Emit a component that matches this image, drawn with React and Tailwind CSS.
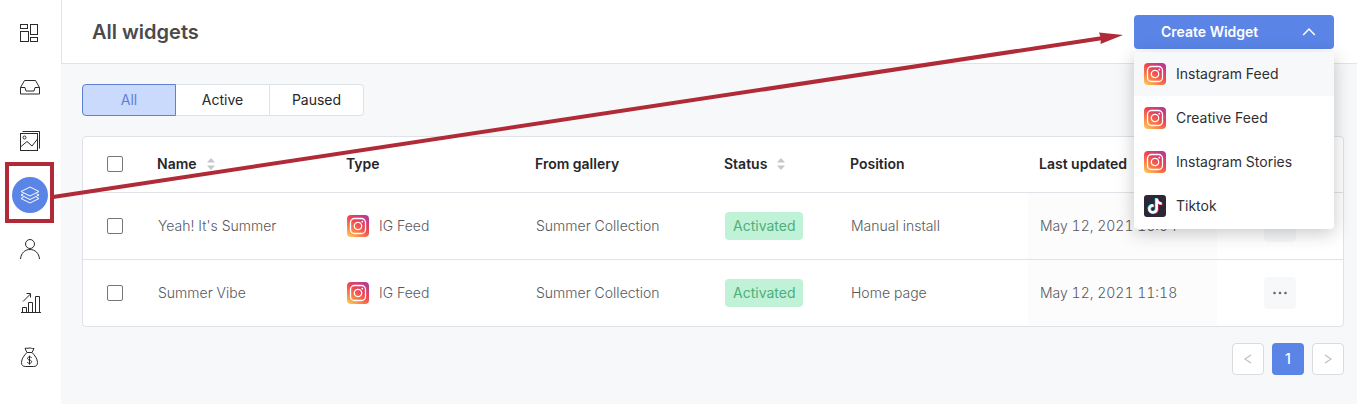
import { useState } from 'react';

const tabs = ['All', 'Active', 'Paused'];

const widgets = [
  { id: 1, name: "Yeah! It's Summer", type: 'IG Feed', gallery: 'Summer Collection', status: 'Activated', position: 'Manual install', updated: 'May 12, 2021 16:04' },
  { id: 2, name: 'Summer Vibe', type: 'IG Feed', gallery: 'Summer Collection', status: 'Activated', position: 'Home page', updated: 'May 12, 2021 11:18' },
];

const menuItems = [
  { label: 'Instagram Feed', icon: 'instagram' },
  { label: 'Creative Feed', icon: 'instagram' },
  { label: 'Instagram Stories', icon: 'instagram' },
  { label: 'Tiktok', icon: 'tiktok' },
];

// Sidebar icons, all on a 20x20 grid
const navItems = [
  {
    label: 'Dashboard',
    icon: (
      <>
        <rect x="0.5" y="1.5" width="7" height="4" />
        <rect x="10.5" y="1.5" width="7" height="10" />
        <rect x="0.5" y="8.5" width="8" height="10" />
        <rect x="10.5" y="14.5" width="7" height="4" />
      </>
    ),
  },
  {
    label: 'Inbox',
    icon: <path d="M0.5 10.5 4.5 3.5h11l4 7v6.5H0.5zM0.5 10.5h4.5l1 3.5h8l1-3.5h4.5" />,
  },
  {
    label: 'Media',
    icon: (
      <>
        <rect x="0.5" y="2.5" width="17" height="17" />
        <path d="M2.5 0.5h17v17" />
        <circle cx="4.5" cy="6.5" r="1.5" />
        <path d="m1 15.500 6-5 5 4.500 5.500-7" />
      </>
    ),
  },
  {
    label: 'Widgets',
    active: true,
    icon: (
      <>
        <path d="m10 2 9 4.500-9 4.500-9-4.500z" />
        <path d="M3.500 8.700 1 10l9 4.500 9-4.500-2.500-1.300" />
        <path d="M3.500 12.200 1 13.500l9 4.500 9-4.500-2.500-1.300" />
      </>
    ),
  },
  {
    label: 'Customers',
    icon: (
      <>
        <circle cx="10" cy="5" r="4.5" />
        <path d="M0.500 20C1 14 5 10.500 10 10.500S19 14 19.500 20" />
      </>
    ),
  },
  {
    label: 'Analytics',
    icon: (
      <path d="M1 19.500h20M2.500 19.500v-5h4v5M8.500 19.500v-10h4v10M15.500 19.500v-16h4v16M3 8.500l7.500-7.500M6.500 0.500h4v4" />
    ),
  },
  {
    label: 'Billing',
    icon: (
      <>
        <path d="M7 5.500 5 1.500c1.500-1 2.500 0.500 4-0.500 1.500-0.500 3 1 5 0.500l-2 4z" />
        <path d="M7 5.500C4 8.500 1.500 12 1.500 15.500c0 3 1.500 4 4 4h8c2.500 0 4-1 4-4 0-3.500-2.500-7-5.500-10" />
        <path d="M11.700 11c-0.500-1-1-1-2.200-1-2.700 0-2.700 2.600 0 3 3 0.500 2.700 3.300 0 3.300-1.300 0-1.800-0.500-2.300-1.300M9.500 8.700v9" />
      </>
    ),
  },
];

const columns = [
  { label: 'Name', sortable: true, width: 'w-[15%]' },
  { label: 'Type', width: 'w-[15%]' },
  { label: 'From gallery', width: 'w-[15%]' },
  { label: 'Status', sortable: true, width: 'w-[10%]' },
  { label: 'Position', width: 'w-[15%]' },
  { label: 'Last updated', width: 'w-[15%]' },
];

function InstagramIcon() {
  return (
    <svg viewBox="0 0 22 22" className="size-[22px] shrink-0" aria-hidden="true">
      <defs>
        <linearGradient id="ig" x1="0.15" y1="1" x2="0.85" y2="0">
          <stop offset="0" stopColor="#fdc357" />
          <stop offset="0.3" stopColor="#fa7a45" />
          <stop offset="0.6" stopColor="#ec4457" />
          <stop offset="1" stopColor="#b23a9c" />
        </linearGradient>
      </defs>
      <rect width="22" height="22" rx="4" fill="url(#ig)" />
      <g fill="none" stroke="#fff" strokeWidth="1.3">
        <rect x="3.5" y="3.5" width="15" height="15" rx="4" />
        <circle cx="11" cy="11" r="3.7" />
      </g>
      <circle cx="15.3" cy="6.7" r="0.9" fill="#fff" />
    </svg>
  );
}

function TiktokIcon() {
  const note = 'M11.500 3.500h2.400c0.300 2.300 1.600 3.600 3.800 3.800v2.500c-1.400 0-2.700-0.400-3.800-1.200v5.200c0 6.400-9.300 6.600-9.700 0.400 0-3.300 2.600-5.200 5.400-4.800v2.500c-1.700-0.400-3 0.600-3 2.200 0 2.900 4.900 3 4.900-0.500z';
  return (
    <svg viewBox="0 0 22 22" className="size-[22px] shrink-0" aria-hidden="true">
      <rect width="22" height="22" rx="3" fill="#2b2638" />
      <path d={note} fill="#25e5df" transform="translate(-0.700 -0.400)" />
      <path d={note} fill="#f5295b" transform="translate(0.700 0.500)" />
      <path d={note} fill="#fff" />
    </svg>
  );
}

function SortIcon() {
  return (
    <svg viewBox="0 0 8 12" className="h-3 w-2" fill="#c4c7cb" aria-hidden="true">
      <path d="M4 0 8 4.500H0zM4 12 0 7.500h8z" />
    </svg>
  );
}

function Chevron({ d, className }) {
  return (
    <svg viewBox="0 0 12 12" className={className} fill="none" stroke="currentColor" aria-hidden="true">
      <path d={d} strokeWidth="1.3" />
    </svg>
  );
}

function Checkbox({ label }) {
  return (
    <input
      type="checkbox"
      aria-label={label}
      className="block size-4 appearance-none rounded-xs border border-[#767676] bg-white checked:bg-[#5a84e6]"
    />
  );
}

function Sidebar() {
  return (
    <nav className="flex w-[61px] shrink-0 flex-col items-center gap-[18px] bg-white pt-[15px] pr-0.5 pb-7">
      {navItems.map(item => (
        <a
          key={item.label}
          href="#"
          aria-label={item.label}
          className={`flex size-9 items-center justify-center rounded-full ${item.active ? 'bg-[#5a84e6] text-white' : 'text-[#2b2b2b]'}`}
        >
          <svg viewBox="0 0 20 20" className="size-5 overflow-visible" fill="none" stroke="currentColor" strokeWidth="1">
            {item.icon}
          </svg>
        </a>
      ))}
    </nav>
  );
}

function CreateMenu() {
  const [open, setOpen] = useState(true);

  return (
    <div className="relative w-50">
      <button
        onClick={() => setOpen(!open)}
        aria-expanded={open}
        className="flex h-[34px] w-full items-center justify-between rounded-sm bg-[#5a84e6] pr-[18px] pl-[27px] text-sm font-semibold text-white"
      >
        Create Widget
        <Chevron d="M1 8.500 6 3.500 11 8.500" className="size-3.5" />
      </button>
      {open && (
        <ul className="absolute top-full right-0 left-0 z-10 mt-[3px] overflow-hidden rounded-sm bg-white pb-px shadow-[0_4px_18px_rgba(0,0,0,0.22)]">
          {menuItems.map((item, i) => (
            <li key={item.label}>
              <button className={`flex h-11 w-full items-center gap-2.5 px-2.5 text-sm text-[#2f2f33] ${i === 0 ? 'bg-[#f7f8fa]' : 'bg-white'}`}>
                {item.icon === 'tiktok' ? <TiktokIcon /> : <InstagramIcon />}
                {item.label}
              </button>
            </li>
          ))}
        </ul>
      )}
    </div>
  );
}

function WidgetTable() {
  return (
    <div className="rounded-sm border border-[#dfe2e6] bg-white">
      <table className="w-full table-fixed text-left text-sm">
        <thead>
          <tr className="h-[55px] border-b border-[#dfe2e6] text-[#26262b]">
            <th className="w-[5%] pl-6">
              <Checkbox label="Select all" />
            </th>
            {columns.map(col => (
              <th key={col.label} className={`px-[11px] font-semibold ${col.width}`}>
                <div className="flex items-center gap-2.5 whitespace-nowrap">
                  {col.label}
                  {col.sortable && <SortIcon />}
                </div>
              </th>
            ))}
            <th className="w-[10%]" aria-label="Actions" />
          </tr>
        </thead>
        <tbody className="text-[#57595e]">
          {widgets.map(widget => (
            <tr key={widget.id} className="h-[67px] border-b border-[#dfe2e6] font-light last:border-0">
              <td className="pl-6">
                <Checkbox label={`Select ${widget.name}`} />
              </td>
              <td className="px-3">{widget.name}</td>
              <td className="px-3">
                <div className="flex items-center gap-2.5">
                  <InstagramIcon />
                  {widget.type}
                </div>
              </td>
              <td className="px-3">{widget.gallery}</td>
              <td className="px-3">
                <span className="inline-block rounded-sm bg-[#c0f2d7] px-2 py-1 font-normal text-[#4fae7c]">
                  {widget.status}
                </span>
              </td>
              <td className="px-3">{widget.position}</td>
              <td className="bg-[#fcfcfc] px-3 whitespace-nowrap tabular-nums">{widget.updated}</td>
              <td>
                <button aria-label="More actions" className="mx-auto flex size-8 items-center justify-center rounded-sm bg-[#f7f8fa] text-[#666a70]">
                  <svg viewBox="0 0 14 4" className="h-1 w-3.5" fill="currentColor">
                    <circle cx="1.5" cy="2" r="1.3" />
                    <circle cx="7" cy="2" r="1.3" />
                    <circle cx="12.5" cy="2" r="1.3" />
                  </svg>
                </button>
              </td>
            </tr>
          ))}
        </tbody>
      </table>
    </div>
  );
}

function Pagination() {
  return (
    <div className="mt-4 flex justify-end gap-2 text-sm">
      <button aria-label="Previous page" className="flex size-8 items-center justify-center rounded-sm border border-[#d9dbdf] bg-white text-[#c0c2c6]">
        <Chevron d="M9 2 3 6l6 4" className="size-3" />
      </button>
      <button className="size-8 rounded-sm bg-[#5a84e6] font-medium text-white">1</button>
      <button aria-label="Next page" className="flex size-8 items-center justify-center rounded-sm border border-[#d9dbdf] bg-white text-[#c0c2c6]">
        <Chevron d="m3 2 6 4-6 4" className="size-3" />
      </button>
    </div>
  );
}

// Red marker box round the nav item, with an arrow to the create button
function Callout() {
  return (
    <svg width="1130" height="230" className="pointer-events-none absolute top-0 left-0 z-20" fill="none" stroke="#b02a37" aria-hidden="true">
      <rect x="7" y="164" width="45" height="57" strokeWidth="4" />
      <path d="M53 197 1103 38" strokeWidth="4" />
      <path d="M1123 35 1099 32.500 1101 38.300 1100.500 44z" fill="#b02a37" stroke="none" />
    </svg>
  );
}

export default function App() {
  const [tab, setTab] = useState('All');

  return (
    <div className="relative flex min-h-screen bg-[#f7f8fa] font-['Inter',sans-serif]">
      <Sidebar />
      <div className="min-w-0 flex-1">
        <header className="flex h-16 items-center justify-between border-b border-l border-[#e1e3e6] bg-white pr-[23px] pl-[30px]">
          <h1 className="text-xl font-semibold text-[#4a4a4d]">All widgets</h1>
          <CreateMenu />
        </header>
        <main className="pt-5 pr-[13px] pb-7 pl-[21px]">
          <div className="mb-5 flex text-sm">
            {tabs.map(t => (
              <button
                key={t}
                onClick={() => setTab(t)}
                className={`h-8 w-[94px] border-y border-r first:rounded-l-sm first:border-l last:rounded-r-sm ${
                  tab === t ? 'border-[#5f7fd0] bg-[#c9dafd] text-[#5f80d6]' : 'border-[#dfe2e6] bg-white text-[#26262b]'
                }`}
              >
                {t}
              </button>
            ))}
          </div>
          <WidgetTable />
          <Pagination />
        </main>
      </div>
      <Callout />
    </div>
  );
}
